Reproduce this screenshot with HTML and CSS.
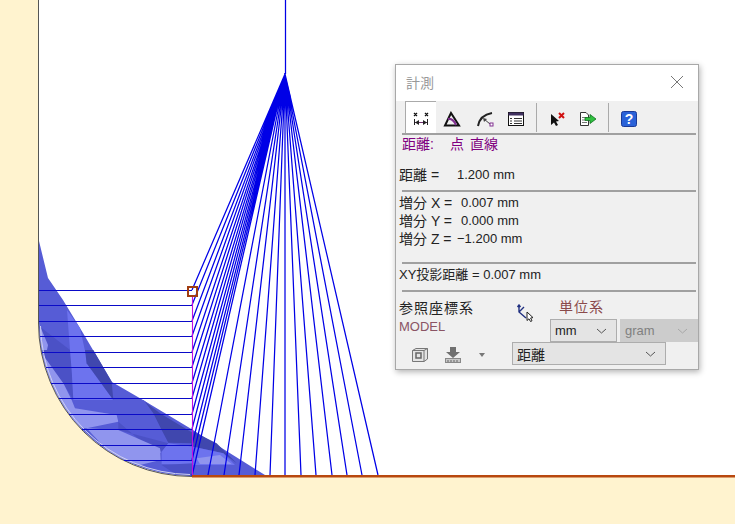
FILE: index.html
```html
<!DOCTYPE html>
<html lang="ja">
<head>
    <meta charset="UTF-8">
    <meta name="viewport" content="width=device-width, initial-scale=1.0">
    <title>計測</title>
    <link rel="stylesheet" href="styles.css">
</head>
<body>
    <svg class="canvas" width="735" height="524" viewBox="0 0 735 524">
        <defs>
            <clipPath id="sheet-clip">
                <path d="M39,0 V323 A153,153 0 0 0 192,476 H735 V0 Z"/>
            </clipPath>
        </defs>
        <path class="sheet" d="M39,0 V323 A153,153 0 0 0 192,476 H735 V0 Z"/>

        <!-- shaded region, upper part -->
        <g clip-path="url(#sheet-clip)">
            <path class="s-base" d="M38,237 L48,278 L63,300 L83,333 L93,350 L112,382 L143,400 L193,430 L265,475 L192,476 L39,476 Z"/>
            <path class="s-light" d="M67,310 L80,328 L87,360 L82,350 L70,350 Z"/>
            <path class="s-mid" d="M39,326 L70,350 L73,392 L50,372 L39,360 Z"/>
            <path class="s-pale" d="M40,326 L48,345 L44,365 L39,350 Z"/>

            <!-- lower part, drawn in crop coordinates -->
            <g transform="translate(30,350) scale(0.3333)">
                <path class="s-mid" d="M30,0 L120,0 L125,60 L130,150 L100,100 L50,30 Z"/>
                <path class="s-pale" d="M30,10 L50,30 L100,100 L125,150 L135,175 L260,195 L265,215 L170,235 L120,230 L60,120 Z"/>
                <path class="s-light" d="M120,0 L165,0 L170,40 L250,150 L130,150 L125,60 Z"/>
                <path class="s-dark" d="M165,0 L190,0 L245,95 L250,150 L170,40 Z"/>
                <path class="s-base" d="M130,150 L250,150 L340,150 L400,195 L490,250 L490,290 L415,280 L265,240 L265,195 L135,170 Z"/>
                <path class="s-dark" d="M345,155 L390,190 L490,250 L490,280 L415,278 L395,240 L370,190 Z"/>
                <path class="s-mid" d="M265,215 L265,240 L415,280 L395,305 L340,280 Z"/>
                <path class="s-pale" d="M170,235 L265,240 L390,295 L392,308 L340,340 L240,310 Z"/>
                <path class="s-light" d="M395,305 L415,280 L490,290 L490,345 L395,342 Z"/>
                <path class="s-pale" d="M240,300 L390,300 L392,330 L330,345 L270,330 Z"/>
                <path class="s-mid" d="M395,345 L490,340 L490,378 L440,375 Z"/>
                <path class="s-dark" d="M490,245 L560,280 L620,340 L580,310 L490,290 Z"/>
                <path class="s-light" d="M490,290 L580,310 L615,345 L490,345 Z"/>
                <path class="s-pale" d="M500,325 L570,315 L605,342 L510,342 Z"/>
            </g>
        </g>

        <path class="edge-shine" d="M40.5,326 A151.5,151.5 0 0 0 190,474.5"/>
        <path class="edge" d="M38.5,0 V323 A153.5,153.5 0 0 0 192,476.5"/>

        <path class="rungs" d="M39,290.5 H192 M39,305.5 H192 M39,321.5 H192 M40,336.5 H192 M42,352.5 H192 M46,367.5 H192 M51,383.5 H192 M59,398.5 H192 M69,414.5 H192 M82,429.5 H192 M100,445.5 H192 M124,460.5 H192"/>

        <path class="fan-cap" d="M285,74 L291,98 L285,104 L279,98 Z"/>
        <path class="fan" d="M285.5,0 V74
            M285,74 L192,290 M285,74 L192,305 M285,74 L192,321 M285,74 L192,336
            M285,74 L192,352 M285,74 L192,367 M285,74 L192,383 M285,74 L192,398
            M285,74 L192,414 M285,74 L192,429 M285,74 L192,445 M285,74 L192,460
            M285,74 L192,476 M285,74 L208,475 M285,74 L224,475 M285,74 L239,475
            M285,74 L255,475 M285,74 L270,475 M285,74 L285,475 M285,74 L301,475
            M285,74 L316,475 M285,74 L332,475 M285,74 L347,475 M285,74 L362,475
            M285,74 L378,475"/>

        <path class="spine" d="M192.5,297 V476"/>
        <path class="floor" d="M192,476.2 H735"/>
        <rect class="marker" x="188" y="287" width="9" height="9"/>
    </svg>

    <div class="dialog">
        <div class="titlebar">
            <span class="title">計測</span>
            <svg class="close" width="14" height="14" viewBox="0 0 14 14"><path d="M1,1 L13,13 M13,1 L1,13"/></svg>
        </div>

        <div class="toolbar">
            <div class="tool tool-active">
                <svg width="18" height="16" viewBox="0 0 18 16">
                    <path d="M2,2 L5,5 M5,2 L2,5 M13,2 L16,5 M16,2 L13,5" stroke="#111" stroke-width="1.3" fill="none"/>
                    <path d="M2.5,8 V14 M15.5,8 V14" stroke="#222" fill="none"/>
                    <path d="M3,11.5 H15" stroke="#703070" fill="none"/>
                    <path d="M3,11.5 L7,9 V14 Z M15,11.5 L11,9 V14 Z" fill="#222"/>
                </svg>
            </div>
            <div class="tool">
                <svg width="18" height="16" viewBox="0 0 18 16">
                    <path d="M8,2 L2,14.5 H16 Z" fill="none" stroke="#111" stroke-width="2"/>
                    <path d="M5,8 Q10,7 13,14" fill="none" stroke="#803090" stroke-width="2"/>
                </svg>
            </div>
            <div class="tool tool-arc">
                <svg width="18" height="16" viewBox="0 0 18 16">
                    <path d="M2,15 Q4,4 16,2" fill="none" stroke="#222" stroke-width="2"/>
                    <path d="M8,8 L14,13" stroke="#444" fill="none"/>
                    <path d="M7,7 L11,8 L8,11 Z" fill="#444"/>
                    <rect x="14" y="12" width="3" height="3" fill="#fff" stroke="#803090"/>
                </svg>
            </div>
            <div class="tool">
                <svg width="18" height="16" viewBox="0 0 18 16">
                    <rect x="1.5" y="1.5" width="15" height="13" fill="#fff" stroke="#111"/>
                    <rect x="1.5" y="1.5" width="15" height="3" fill="#403060"/>
                    <path d="M3,7.5 H5 M7,7.5 H15 M3,10 H5 M7,10 H15 M3,12.5 H5 M7,12.5 H15" stroke="#333" fill="none"/>
                </svg>
            </div>
            <span class="tool-sep"></span>
            <div class="tool">
                <svg width="18" height="16" viewBox="0 0 18 16">
                    <path d="M3,3 L3,14 L6,11.5 L8,15 L10,14 L8,10.5 L11,10 Z" fill="#111"/>
                    <path d="M11,2 L16,7 M16,2 L11,7" stroke="#d01010" stroke-width="2" fill="none"/>
                </svg>
            </div>
            <div class="tool">
                <svg width="18" height="16" viewBox="0 0 18 16">
                    <path d="M1.5,1.5 H7 L9.5,4 V14.5 H1.5 Z" fill="#fff" stroke="#333"/>
                    <path d="M3,6.5 H8 M3,9 H6 M3,11.5 H8" stroke="#777" fill="none"/>
                    <path d="M6,6.5 H11 V3.5 L17,8 L11,12.5 V9.5 H6 Z" fill="#30c040" stroke="#107020" stroke-width="0.8"/>
                </svg>
            </div>
            <span class="tool-sep"></span>
            <div class="tool">
                <svg width="18" height="16" viewBox="0 0 18 16">
                    <rect x="1.5" y="0.5" width="15" height="15" rx="2" fill="#2a62d8" stroke="#1a3a98"/>
                    <text class="help-mark" x="9" y="13">?</text>
                </svg>
            </div>
        </div>

        <div class="rule"></div>
        <div class="row row-mode">
            <span class="mode-name">距離:</span>
            <span class="mode-kind">点 直線</span>
        </div>
        <div class="row row-total">
            <span class="label-total">距離 =</span>
            <span>1.200 mm</span>
        </div>
        <div class="rule rule-a"></div>
        <div class="deltas">
            <div class="row"><span class="label-delta">増分 X =</span><span class="val">0.007 mm</span></div>
            <div class="row"><span class="label-delta">増分 Y =</span><span class="val">0.000 mm</span></div>
            <div class="row"><span class="label-delta">増分 Z =</span><span class="val val-neg">−1.200 mm</span></div>
        </div>
        <div class="rule rule-b"></div>
        <div class="row row-proj">XY投影距離 = 0.007 mm</div>
        <div class="rule rule-c"></div>

        <div class="refs">
            <div class="ref-left">
                <div class="ref-name">参照座標系</div>
                <div class="ref-model">MODEL</div>
            </div>
            <svg class="axes" width="18" height="18" viewBox="0 0 18 18">
                <path d="M3,1 V8 L10,14 M3,8 L8,3 M1.5,3 L3,1 L4.5,3" fill="none" stroke="#203080" stroke-width="1.4"/>
                <path d="M11,8 V16.5 L13,14.8 L14.5,17.5 L16,16.8 L14.6,14 L17,13.6 Z" fill="#fff" stroke="#222"/>
            </svg>
            <div class="units">
                <div class="units-label">単位系</div>
                <div class="units-row">
                    <div class="pick pick-mm">mm<svg class="chev" width="11" height="6" viewBox="0 0 11 6"><path d="M1,1 L5.5,5 L10,1"/></svg></div>
                    <div class="pick pick-off">gram<svg class="chev" width="11" height="6" viewBox="0 0 11 6"><path d="M1,1 L5.5,5 L10,1"/></svg></div>
                </div>
            </div>
        </div>

        <div class="foot">
            <svg class="foot-icon" width="18" height="16" viewBox="0 0 18 16">
                <path d="M1.5,3.5 L5,1.5 H16.5 V12 L13,14.5 H1.5 Z" fill="#e4e4e4" stroke="#777"/>
                <path d="M1.5,3.5 H13 V14.5 M13,3.5 L16.5,1.5" fill="none" stroke="#777"/>
                <rect x="5" y="6" width="5" height="5" fill="none" stroke="#666" stroke-width="1.5"/>
            </svg>
            <svg class="foot-icon foot-save" width="16" height="16" viewBox="0 0 16 16">
                <path d="M5,0 H11 V5 H15 L8,11 L1,5 H5 Z" fill="#707070"/>
                <rect x="0.5" y="11.5" width="15" height="4" fill="#c8c8c8" stroke="#888"/>
                <path d="M3,13 V15 M6,13 V15 M9,13 V15 M12,13 V15" stroke="#666" fill="none"/>
            </svg>
            <svg class="foot-drop" width="6" height="4" viewBox="0 0 6 4"><path d="M0,0 H6 L3,4 Z" fill="#777"/></svg>
            <div class="pick pick-kind">距離<svg class="chev" width="11" height="6" viewBox="0 0 11 6"><path d="M1,1 L5.5,5 L10,1"/></svg></div>
        </div>
    </div>
</body>
</html>
```

FILE: styles.css
```css
html, body {
    margin: 0;
    padding: 0;
}
body {
    width: 735px;
    height: 524px;
    overflow: hidden;
    position: relative;
    background: #fff3cf;
    font-family: "Liberation Sans", "Noto Sans CJK JP", sans-serif;
    font-size: 13px;
    color: #222;
}
.canvas {
    display: block;
}
.sheet {
    fill: #fff;
}
.s-base {
    fill: #565cd6;
}
.s-mid {
    fill: #4b51c6;
}
.s-dark {
    fill: #4047ae;
}
.s-light {
    fill: #6d73ee;
}
.s-pale {
    fill: #9095ee;
}
.edge {
    fill: none;
    stroke: #555;
    stroke-width: 1;
}
.edge-shine {
    fill: none;
    stroke: #d0d2f0;
    stroke-width: 1;
}
.rungs {
    fill: none;
    stroke: #0a0ac8;
    stroke-width: 1.1;
}
.fan {
    fill: none;
    stroke: #0000e6;
    stroke-width: 1.25;
}
.fan-cap {
    fill: #0000e6;
}
.spine {
    fill: none;
    stroke: #c010e0;
    stroke-width: 1.1;
}
.floor {
    fill: none;
    stroke: #b8480f;
    stroke-width: 2.4;
}
.marker {
    fill: none;
    stroke: #a03c10;
    stroke-width: 2;
}

.dialog {
    position: absolute;
    left: 395px;
    top: 64px;
    width: 302px;
    height: 304px;
    background: #f0f0f0;
    border: 1px solid #a8a8a8;
    box-shadow: 1px 2px 6px rgba(0, 0, 0, 0.3);
}
.titlebar {
    height: 36px;
    box-sizing: border-box;
    background: #fff;
    display: flex;
    align-items: center;
    justify-content: space-between;
    padding: 0 14px 3px 10px;
}
.title {
    font-size: 14px;
    color: #999;
}
.close path {
    fill: none;
    stroke: #777;
}
.toolbar {
    height: 32px;
    display: flex;
    align-items: stretch;
    padding-left: 9px;
}
.tool {
    width: 31px;
    box-sizing: border-box;
    padding-top: 3px;
    display: flex;
    align-items: center;
    justify-content: center;
}
.tool-active {
    background: #fff;
    border-left: 1px solid #aaa;
    border-top: 1px solid #aaa;
    padding-top: 2px;
}
.tool-arc {
    margin-left: 2px;
}
.tool-sep {
    width: 1px;
    margin: 2px 4px 1px 5px;
    background: #aaa;
}
.help-mark {
    font-family: "Liberation Sans", sans-serif;
    font-size: 14px;
    font-weight: bold;
    fill: #fff;
    text-anchor: middle;
}
.rule {
    height: 2px;
    margin: 0 2px 0 6px;
    background: #a0a0a0;
}
.row {
    height: 18px;
    line-height: 18px;
    white-space: nowrap;
    display: flex;
}
.row-mode {
    color: #800080;
    font-size: 14px;
    padding-left: 6px;
}
.mode-name {
    width: 48px;
}
.mode-kind {
    word-spacing: 2px;
}
.row-total {
    margin-top: 13px;
    padding-left: 3px;
}
.label-total {
    width: 58px;
    font-size: 14px;
}
.rule-a {
    margin-top: 6px;
}
.deltas {
    margin-top: 2px;
    padding-left: 3px;
}
.label-delta {
    width: 62px;
    font-size: 14px;
}
.val-neg {
    margin-left: -4px;
}
.rule-b {
    margin-top: 14px;
}
.row-proj {
    margin-top: 2px;
    padding-left: 3px;
}
.rule-c {
    margin-top: 6px;
}
.refs {
    height: 50px;
    display: flex;
    position: relative;
}
.ref-left {
    width: 120px;
    padding: 7px 0 0 3px;
    box-sizing: border-box;
}
.ref-name {
    font-size: 14px;
    line-height: 18px;
    letter-spacing: 1px;
}
.ref-model {
    margin-top: 1px;
    line-height: 18px;
    color: #8a5464;
}
.axes {
    margin-top: 12px;
}
.units {
    margin-left: 16px;
}
.units-label {
    height: 27px;
    padding: 6px 0 0 9px;
    box-sizing: border-box;
    font-size: 14px;
    line-height: 18px;
    letter-spacing: 1px;
    color: #8a4a4a;
}
.units-row {
    display: flex;
    gap: 3px;
}
.pick {
    height: 23px;
    box-sizing: border-box;
    border: 1px solid #adadad;
    background: #e4e4e4;
    display: flex;
    align-items: center;
    justify-content: space-between;
    padding: 0 9px 0 4px;
}
.chev path {
    fill: none;
    stroke: #555;
}
.pick-mm {
    width: 67px;
}
.pick-off {
    width: 78px;
    background: #cccccc;
    border-color: #cccccc;
    color: #808080;
}
.pick-off .chev path {
    stroke: #a8a8a8;
}
.foot {
    display: flex;
    align-items: flex-start;
    padding-left: 15px;
}
.foot-icon {
    margin-top: 5px;
}
.foot-save {
    margin-left: 16px;
}
.foot-drop {
    margin: 11px 0 0 18px;
}
.pick-kind {
    width: 154px;
    margin-left: 27px;
    font-size: 14px;
}
```
